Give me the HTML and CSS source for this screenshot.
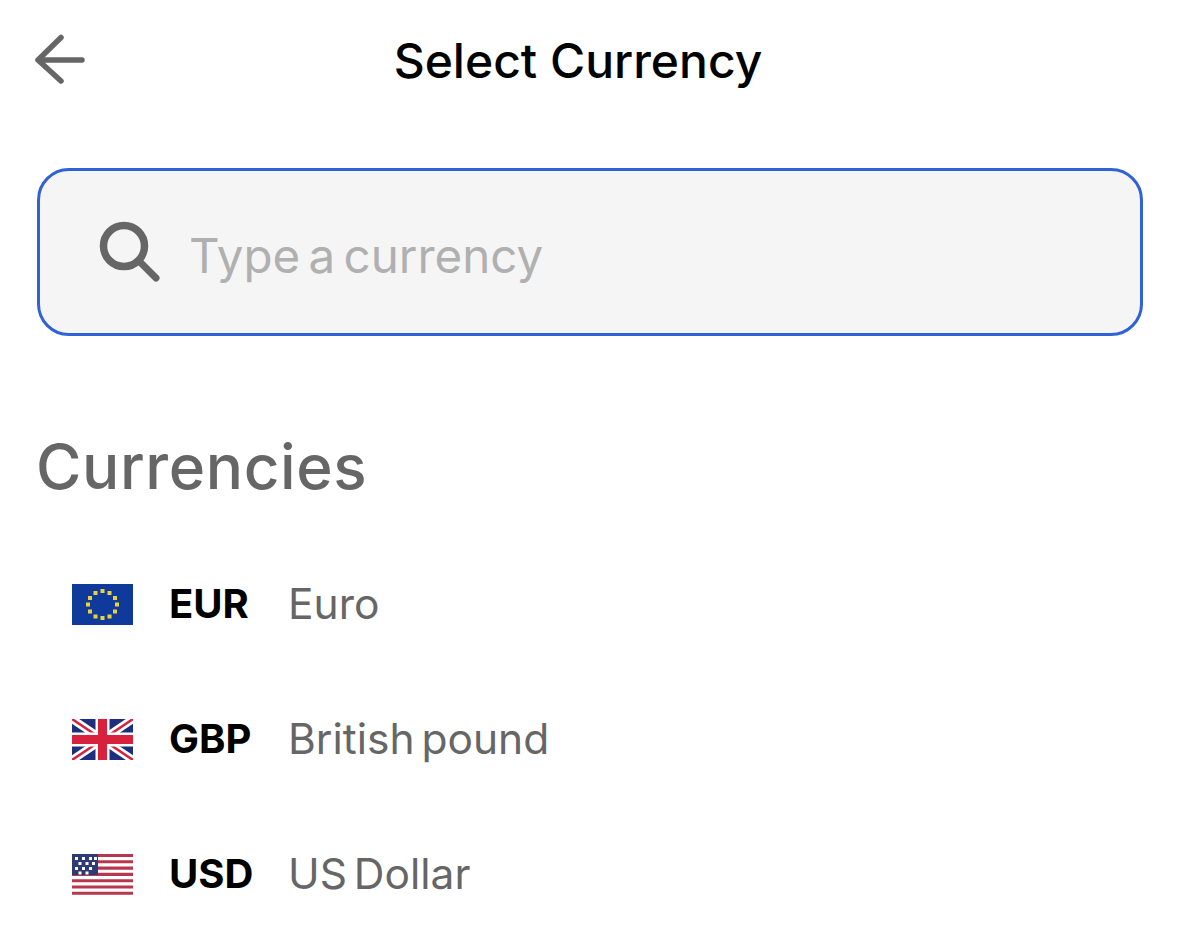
FILE: index.html
```html
<!DOCTYPE html>
<html lang="en">
    <head>
        <meta charset="UTF-8">
        <meta name="viewport" content="width=device-width, initial-scale=1.0">
        <title>Select Currency</title>
        <link rel="stylesheet" href="styles.css">
    </head>
    <body>
        <header class="topbar">
            <svg class="back-icon" width="52" height="52" viewBox="0 0 52 52">
                <path d="M27 3.500 L4 26 L27 47 M4 26 L48 26" fill="none" stroke="#666" stroke-width="5.500" stroke-linecap="round" stroke-linejoin="round"/>
            </svg>
            <h1 class="title">Select Currency</h1>
        </header>

        <div class="search">
            <svg class="search-icon" width="64" height="64" viewBox="0 0 64 64">
                <circle cx="26" cy="26" r="20.500" fill="none" stroke="#666" stroke-width="7.500"/>
                <path d="M41 41 L58 58" fill="none" stroke="#666" stroke-width="7" stroke-linecap="round"/>
            </svg>
            <span class="placeholder">Type a currency</span>
        </div>

        <h2 class="section-title">Currencies</h2>

        <ul class="currency-list">
            <li class="currency">
                <svg class="flag" width="61" height="41" viewBox="0 0 61 41">
                    <rect width="61" height="41" fill="#0f3a9c"/>
                    <g fill="#e8d33a">
                        <rect x="28.500" y="5" width="4" height="4"/>
                        <rect x="35.500" y="7" width="4" height="4"/>
                        <rect x="41" y="12" width="4" height="4"/>
                        <rect x="43" y="18.500" width="4" height="4"/>
                        <rect x="41" y="25.500" width="4" height="4"/>
                        <rect x="35.500" y="30.500" width="4" height="4"/>
                        <rect x="28.500" y="32" width="4" height="4"/>
                        <rect x="21.500" y="30.500" width="4" height="4"/>
                        <rect x="16" y="25.500" width="4" height="4"/>
                        <rect x="14" y="18.500" width="4" height="4"/>
                        <rect x="16" y="12" width="4" height="4"/>
                        <rect x="21.500" y="7" width="4" height="4"/>
                    </g>
                </svg>
                <span class="code">EUR</span>
                <span class="name">Euro</span>
            </li>
            <li class="currency">
                <svg class="flag" width="61" height="41" viewBox="0 0 61 41">
                    <rect width="61" height="41" fill="#1c2f7c"/>
                    <path d="M0 0 L61 41 M61 0 L0 41" stroke="#fff" stroke-width="8"/>
                    <path d="M0 0 L61 41 M61 0 L0 41" stroke="#d8213c" stroke-width="2.500"/>
                    <path d="M30.500 0 V41 M0 20.500 H61" stroke="#fff" stroke-width="14"/>
                    <path d="M30.500 0 V41 M0 20.500 H61" stroke="#d8213c" stroke-width="9"/>
                </svg>
                <span class="code">GBP</span>
                <span class="name">British pound</span>
            </li>
            <li class="currency">
                <svg class="flag" width="61" height="41" viewBox="0 0 61 41">
                    <rect width="61" height="41" fill="#fff"/>
                    <path d="M0 1.500 H61 M0 7.800 H61 M0 14.100 H61 M0 20.400 H61 M0 26.700 H61 M0 33 H61 M0 39.300 H61" stroke="#b7374f" stroke-width="3.100"/>
                    <rect width="26" height="21" fill="#2f3a78"/>
                    <g fill="#fff">
                        <rect x="3" y="3" width="3" height="3"/>
                        <rect x="10" y="3" width="3" height="3"/>
                        <rect x="17" y="3" width="3" height="3"/>
                        <rect x="22" y="3" width="3" height="3"/>
                        <rect x="6.500" y="8" width="3" height="3"/>
                        <rect x="13.500" y="8" width="3" height="3"/>
                        <rect x="20" y="8" width="3" height="3"/>
                        <rect x="3" y="13" width="3" height="3"/>
                        <rect x="10" y="13" width="3" height="3"/>
                        <rect x="17" y="13" width="3" height="3"/>
                        <rect x="6.500" y="17.500" width="3" height="3"/>
                        <rect x="13.500" y="17.500" width="3" height="3"/>
                    </g>
                </svg>
                <span class="code">USD</span>
                <span class="name">US Dollar</span>
            </li>
        </ul>
    </body>
</html>
```

FILE: styles.css
```css
* {
    box-sizing: border-box;
}
body {
    margin: 0;
    padding: 34px 37px 0;
    background-color: #fff;
    font-family: Inter, "Noto Sans", sans-serif;
    overflow: hidden;
}
.topbar {
    position: relative;
    display: flex;
    justify-content: center;
    align-items: center;
    height: 52px;
    padding-right: 24px;
}
.back-icon {
    position: absolute;
    left: -3px;
    top: 0;
}
.title {
    margin: 0;
    font-size: 48px;
    font-weight: 500;
    color: #000;
}
.search {
    display: flex;
    align-items: center;
    gap: 27px;
    height: 168px;
    margin-top: 82px;
    padding-left: 58px;
    background-color: #f5f5f5;
    border: 3px solid #2f62d6;
    border-radius: 32px;
}
.placeholder {
    padding-top: 6px;
    font-size: 47.500px;
    word-spacing: -5px;
    color: #b0b0b0;
}
.section-title {
    margin: 95px 0 0 -1px;
    font-size: 62px;
    line-height: 72px;
    font-weight: 500;
    letter-spacing: 0.600px;
    color: #666;
}
.currency-list {
    list-style: none;
    margin: 33px 0 0;
    padding: 0 0 0 35px;
}
.currency {
    display: flex;
    align-items: center;
    height: 135px;
    font-size: 40px;
}
.flag {
    flex: none;
    margin-top: 2px;
}
.code {
    width: 119px;
    margin-left: 36px;
    font-weight: 700;
    color: #000;
}
.name {
    font-size: 42.500px;
    word-spacing: -5px;
    color: #666;
}
```
